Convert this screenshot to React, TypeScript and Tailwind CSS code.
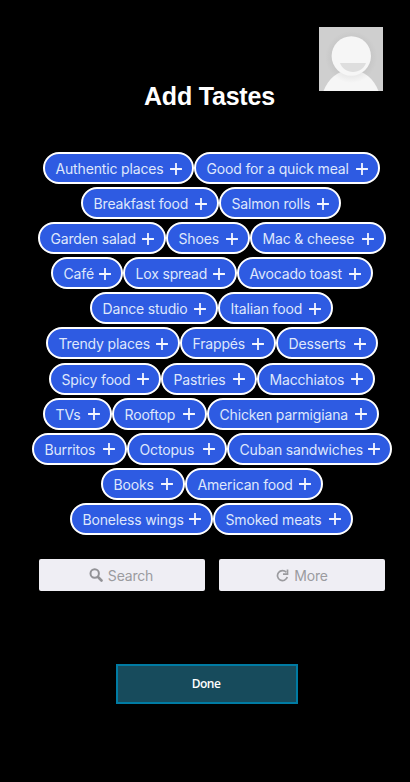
type Taste = [label: string, width: string];

const rows: { indent: string; tastes: Taste[] }[] = [
  { indent: "pl-[43px]", tastes: [["Authentic places", "w-[151px]"], ["Good for a quick meal", "w-[186px]"]] },
  { indent: "pl-[81px]", tastes: [["Breakfast food", "w-[138px]"], ["Salmon rolls", "w-[122px]"]] },
  { indent: "pl-[38px]", tastes: [["Garden salad", "w-[128px]"], ["Shoes", "w-[84px]"], ["Mac & cheese", "w-[136px]"]] },
  { indent: "pl-[51px]", tastes: [["Café", "w-[72px]"], ["Lox spread", "w-[114px]"], ["Avocado toast", "w-[136px]"]] },
  { indent: "pl-[90px]", tastes: [["Dance studio", "w-[128px]"], ["Italian food", "w-[115px]"]] },
  { indent: "pl-[46px]", tastes: [["Trendy places", "w-[134px]"], ["Frappés", "w-[96px]"], ["Desserts", "w-[102px]"]] },
  { indent: "pl-[49px]", tastes: [["Spicy food", "w-[112px]"], ["Pastries", "w-[96px]"], ["Macchiatos", "w-[118px]"]] },
  { indent: "pl-[43px]", tastes: [["TVs", "w-[69px]"], ["Rooftop", "w-[95px]"], ["Chicken parmigiana", "w-[172px]"]] },
  { indent: "pl-[32px]", tastes: [["Burritos", "w-[95px]"], ["Octopus", "w-[100px]"], ["Cuban sandwiches", "w-[165px]"]] },
  { indent: "pl-[101px]", tastes: [["Books", "w-[84px]"], ["American food", "w-[138px]"]] },
  { indent: "pl-[70px]", tastes: [["Boneless wings", "w-[143px]"], ["Smoked meats", "w-[140px]"]] },
];

function Plus() {
  return (
    <svg viewBox="0 0 12 12" className="size-3 shrink-0" stroke="#f4f6ff" strokeWidth="1.8" strokeLinecap="round">
      <path d="M6 .5v11M.5 6h11" />
    </svg>
  );
}

function Chip({ label, width }: { label: string; width: string }) {
  return (
    <button
      className={`flex h-8 shrink-0 items-center justify-between rounded-full border-2 border-white bg-[#2e5be2] pt-px pl-[10.5px] pr-[10px] text-[14px] tracking-[-0.16px] whitespace-nowrap text-[#dfe7fc] ${width}`}
    >
      <span>{label}</span>
      <Plus />
    </button>
  );
}

function Avatar() {
  return (
    <svg viewBox="0 0 64 64" className="size-16">
      <defs>
        <radialGradient id="shade">
          <stop offset="0.72" stopColor="#888" stopOpacity="0.4" />
          <stop offset="1" stopColor="#888" stopOpacity="0" />
        </radialGradient>
      </defs>
      <path fill="#cfcfcf" d="M0 0h64v64H0z" />
      <path fill="#f6f6f6" d="M4.500 64C9 52 19 43 32 43s23 9 27.500 21Z" />
      <circle cx="32.300" cy="30" r="26" fill="url(#shade)" opacity="0.3" />
      <circle cx="32.300" cy="29" r="19.700" fill="#f6f6f6" />
      <path fill="#dedede" d="M21 36h26c-2 5.500-7 9-13 9s-11-3.500-13-9Z" />
    </svg>
  );
}

export default function App() {
  return (
    <main className="h-[782px] w-[410px] overflow-hidden bg-black font-['Inter',sans-serif]">
      <header className="flex h-[152px] pt-[27px]">
        <h1 className="ml-[144px] mt-[51px] w-[175px] font-['Liberation_Sans',sans-serif] text-[25px] leading-9 font-bold tracking-[-0.2px] whitespace-nowrap text-white">
          Add Tastes
        </h1>
        <Avatar />
      </header>
      <section className="flex h-[407px] flex-col gap-[3.1px]">
        {rows.map((row) => (
          <div key={row.indent + row.tastes[0][0]} className={`flex ${row.indent}`}>
            {row.tastes.map(([label, width]) => (
              <Chip key={label} label={label} width={width} />
            ))}
          </div>
        ))}
      </section>
      <div className="flex gap-[14px] pl-[39px] text-[14px] tracking-[-0.2px] text-[#9b9b9f]">
        <button className="flex h-8 w-[166px] items-center justify-center gap-[5px] rounded-[2px] bg-[#efeef4] pr-[2px]">
          <svg viewBox="0 0 14 14" className="size-[14px]" fill="none" stroke="#929296" strokeLinecap="round">
            <circle cx="5.700" cy="5.500" r="4.200" strokeWidth="2" />
            <path d="m9 9 3.500 3.500" strokeWidth="2.600" />
          </svg>
          <span>Search</span>
        </button>
        <button className="flex h-8 w-[166px] items-center justify-center gap-[5px] rounded-[2px] bg-[#efeef4]">
          <svg viewBox="0 0 13 13" className="size-[13px]" fill="none" stroke="#9b9b9f" strokeWidth="1.700">
            <path d="M11.300 8A5 5 0 1 1 10.300 3.300" />
            <path d="M11.500 .5v4.700H7" />
          </svg>
          <span>More</span>
        </button>
      </div>
      <button className="mt-[73px] ml-[116px] flex h-10 w-[182px] items-center justify-center border-2 border-[#007ba3] bg-[#174b5c] pr-[2px] font-['Open_Sans',sans-serif] text-[12px] font-semibold tracking-[-0.5px] text-white">
        Done
      </button>
    </main>
  );
}
